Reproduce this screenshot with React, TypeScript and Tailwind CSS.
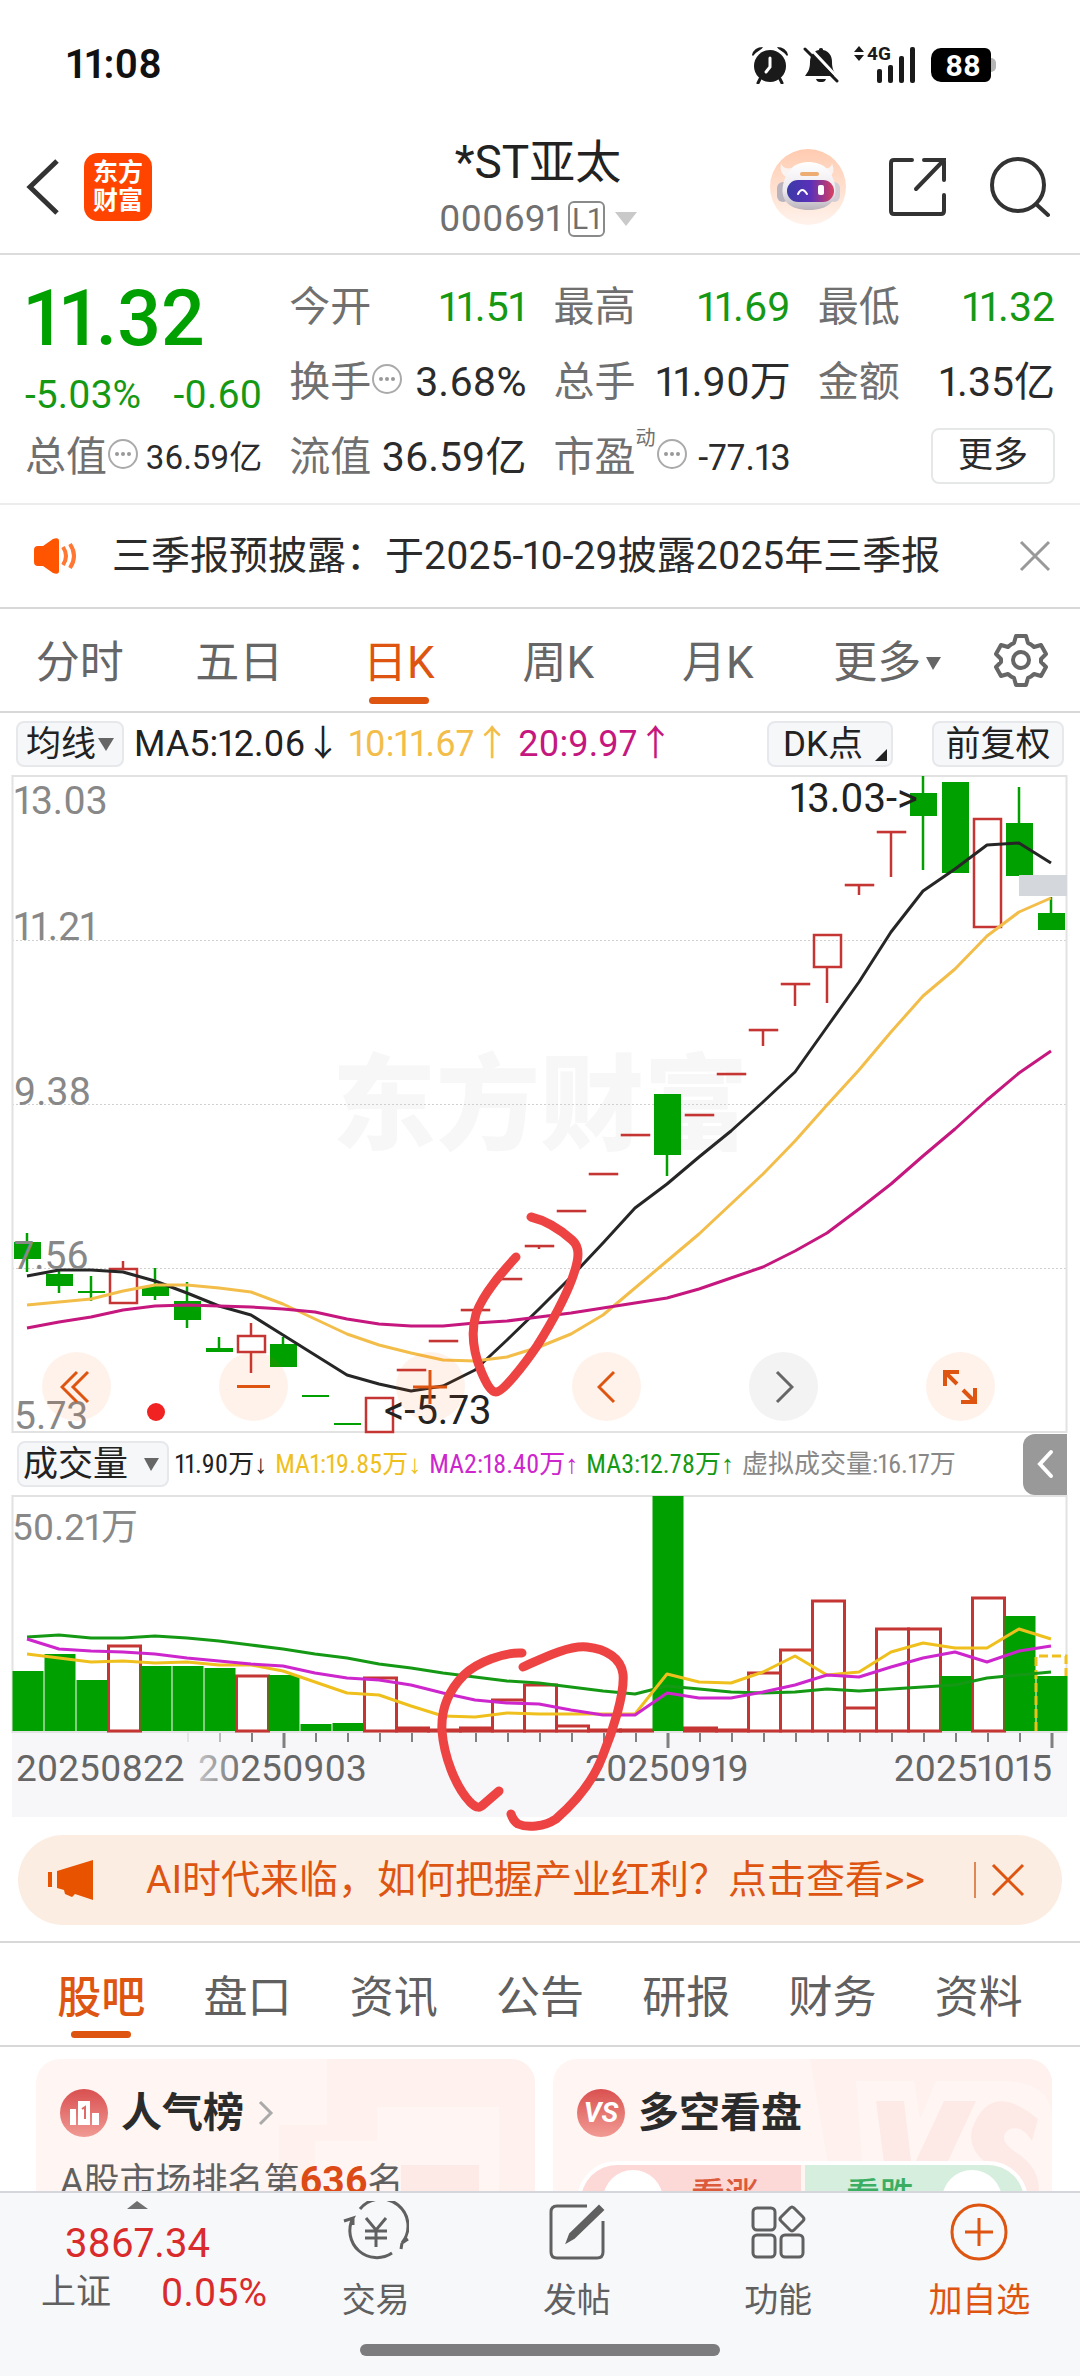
import React from 'react';

const GREEN = '#00a000';
const RED = '#c43533';

type Candle = {
  up: boolean;
  high: number;
  top: number;
  bottom: number;
  low: number;
};

const c = (up: boolean, high: number, top: number, bottom: number, low: number): Candle => ({
  up,
  high,
  top,
  bottom,
  low,
});

const candles: Candle[] = [
  c(false, 1234, 1243, 1260, 1273),
  c(false, 1271, 1275, 1287, 1294),
  c(false, 1277, 1292, 1294, 1302),
  c(true, 1262, 1270, 1304, 1304),
  c(false, 1269, 1287, 1297, 1301),
  c(false, 1283, 1302, 1321, 1329),
  c(false, 1338, 1349, 1353, 1353),
  c(true, 1324, 1337, 1353, 1374),
  c(false, 1338, 1345, 1368, 1368),
  c(false, 1397, 1396, 1398, 1397),
  c(false, 1425, 1424, 1426, 1425),
  c(true, 1399, 1399, 1433, 1433),
  c(true, 1371, 1371, 1371, 1371),
  c(true, 1342, 1342, 1342, 1342),
  c(true, 1311, 1311, 1311, 1311),
  c(true, 1280, 1280, 1280, 1280),
  c(true, 1247, 1247, 1247, 1250),
  c(true, 1212, 1212, 1212, 1212),
  c(true, 1175, 1175, 1175, 1175),
  c(true, 1136, 1136, 1136, 1136),
  c(false, 1095, 1095, 1156, 1177),
  c(true, 1116, 1116, 1116, 1116),
  c(true, 1075, 1075, 1075, 1075),
  c(true, 1031, 1031, 1031, 1047),
  c(true, 985, 985, 985, 1007),
  c(true, 936, 936, 968, 1004),
  c(true, 886, 886, 886, 896),
  c(true, 833, 833, 833, 878),
  c(false, 777, 794, 817, 871),
  c(false, 783, 783, 874, 874),
  c(true, 820, 820, 928, 928),
  c(false, 788, 824, 877, 877),
  c(false, 898, 914, 931, 931),
];

const ma5 = [
  1277, 1271, 1271, 1273, 1282, 1294, 1307, 1316, 1336, 1356, 1376, 1385, 1392, 1387, 1371, 1341, 1310, 1278, 1244,
  1209, 1185, 1158, 1132, 1103, 1073, 1028, 983, 933, 892, 870, 846, 844, 864,
];
const ma10 = [
  1306, 1303, 1300, 1292, 1286, 1286, 1289, 1293, 1305, 1320, 1335, 1346, 1354, 1361, 1362, 1358, 1348, 1335, 1316,
  1289, 1262, 1235, 1205, 1175, 1142, 1106, 1071, 1033, 997, 970, 937, 913, 899,
];
const ma20 = [
  1329, 1323, 1318, 1311, 1307, 1306, 1307, 1308, 1310, 1313, 1320, 1325, 1327, 1327, 1324, 1322, 1318, 1314, 1309,
  1304, 1299, 1290, 1279, 1268, 1252, 1234, 1210, 1185, 1157, 1130, 1101, 1074, 1052,
];

// top of every volume bar, all of them stand on 1732
const volumes = [
  1672, 1655, 1681, 1647, 1667, 1667, 1669, 1677, 1676, 1725, 1724, 1679, 1729, 1731, 1729, 1701, 1686, 1727, 1731,
  1731, 1497, 1729, 1731, 1674, 1651, 1602, 1709, 1630, 1630, 1677, 1599, 1617, 1677,
];
const vma1 = [
  1655, 1659, 1663, 1662, 1664, 1663, 1666, 1666, 1672, 1683, 1694, 1696, 1707, 1717, 1718, 1714, 1715, 1715, 1715,
  1715, 1675, 1683, 1684, 1673, 1657, 1676, 1673, 1653, 1644, 1649, 1649, 1630, 1640,
];
const vma2 = [
  1640, 1650, 1652, 1653, 1655, 1659, 1662, 1665, 1667, 1674, 1679, 1681, 1686, 1694, 1701, 1704, 1705, 1711, 1716,
  1716, 1694, 1699, 1699, 1693, 1686, 1676, 1678, 1668, 1659, 1653, 1663, 1652, 1647,
];
const vma3 = [
  1638, 1636, 1639, 1639, 1637, 1639, 1642, 1646, 1650, 1655, 1659, 1665, 1669, 1674, 1678, 1682, 1684, 1688, 1692,
  1695, 1687, 1690, 1693, 1694, 1693, 1690, 1692, 1690, 1688, 1686, 1679, 1676, 1673,
];

const cx = (i: number) => 27 + i * 32;
const line = (ys: number[]) => ys.map((y, i) => `${cx(i)},${y}`).join(' ');

function StatusBar() {
  return (
    <div className="flex h-[96px] items-center justify-between pt-[34px] pr-[84px] pl-[66px]">
      <span className="text-[40px] leading-none font-semibold text-[#111]">11:08</span>
      <div className="flex items-center">
        <svg width="38" height="38" viewBox="0 0 38 38" fill="#1a1a1a">
          <circle cx="19" cy="20" r="16" />
          <path d="M1 9 Q3 1 12 1 Q11 3 9 4 Q4 7 2 10 Z M37 9 Q35 1 26 1 Q27 3 29 4 Q34 7 36 10 Z" />
          <path d="M9 33 L7 37 M29 33 L31 37" stroke="#1a1a1a" strokeWidth="3" strokeLinecap="round" />
          <path d="M19 12 V21 L15 26" stroke="#fff" strokeWidth="3" fill="none" strokeLinecap="round" />
        </svg>
        <svg className="ml-[14px]" width="36" height="38" viewBox="0 0 36 38" fill="#1a1a1a">
          <path d="M18 2 C20 2 20 3 20 4 C26 5 29 10 29 16 C29 23 31 26 34 30 H2 C5 26 7 23 7 16 C7 10 10 5 16 4 C16 3 16 2 18 2 Z" />
          <path d="M13 33 H23 C22 36 20 36 18 36 C16 36 14 36 13 33 Z" />
          <path d="M5 0 L36 33" stroke="#fff" strokeWidth="3" />
          <path d="M2 3 L34 35" stroke="#1a1a1a" strokeWidth="3" strokeLinecap="round" />
        </svg>
        <div className="relative ml-[14px] h-[38px] w-[64px]">
          <svg width="64" height="38" viewBox="0 0 64 38" fill="#1a1a1a">
            <path d="M6 0 L11 6 H1 Z M6 15 L11 9 H1 Z" />
            <rect x="24" y="23" width="5" height="14" rx="2" />
            <rect x="35" y="19" width="5" height="18" rx="2" />
            <rect x="46" y="10" width="5" height="27" rx="2" />
            <rect x="57" y="1" width="5" height="36" rx="2" />
          </svg>
          <span className="absolute top-0 left-[14px] text-[19px] leading-[16px] font-bold text-[#1a1a1a]">4G</span>
        </div>
        <div className="ml-[14px] flex items-center">
          <span className="flex h-[34px] w-[60px] items-center justify-center rounded-l-[10px] rounded-r-[6px] bg-black pl-[4px] text-[30px] font-bold text-white">
            88
          </span>
          <span className="h-[14px] w-[5px] rounded-r-[5px] bg-[#b5b5b5]" />
        </div>
      </div>
    </div>
  );
}

function Robot() {
  return (
    <svg width="76" height="76" viewBox="0 0 76 76">
      <defs>
        <linearGradient id="halo" x1="0" y1="0" x2="0" y2="1">
          <stop offset="0" stopColor="#ffcbb0" />
          <stop offset="1" stopColor="#fff3ec" />
        </linearGradient>
        <linearGradient id="visor" x1="0" y1="0" x2="1" y2="0">
          <stop offset="0" stopColor="#3a3aa8" />
          <stop offset="0.5" stopColor="#5a30b8" />
          <stop offset="1" stopColor="#d8405f" />
        </linearGradient>
        <linearGradient id="helmet" x1="0" y1="0" x2="0" y2="1">
          <stop offset="0" stopColor="#ffffff" />
          <stop offset="0.6" stopColor="#ece8ee" />
          <stop offset="1" stopColor="#b9b2ba" />
        </linearGradient>
      </defs>
      <circle cx="38" cy="38" r="38" fill="url(#halo)" />
      <path d="M11 14 Q13 21 21 19 L16 28 Q9 24 11 14 Z M62 14 Q61 21 53 19 L59 28 Q66 24 62 14 Z" fill="#fbf3f0" />
      <rect x="7" y="33" width="12" height="20" rx="6" fill="#b9b3bd" />
      <rect x="58" y="33" width="12" height="20" rx="6" fill="#d3cdd6" />
      <path d="M38 13 C54 13 62 22 65 36 C68 52 58 61 39 61 C20 61 10 52 13 36 C16 22 24 13 38 13 Z" fill="url(#helmet)" />
      <rect x="30" y="23" width="19" height="4" rx="2" fill="#ecac72" />
      <rect x="17" y="31" width="47" height="22" rx="11" fill="url(#visor)" />
      <path d="M28 45 Q32 37 37 45" stroke="#fff" strokeWidth="2" fill="none" strokeLinecap="round" />
      <rect x="48" y="36" width="6" height="10" rx="2" fill="#fff" />
    </svg>
  );
}

function Header() {
  return (
    <header className="grid h-[159px] grid-cols-[1fr_auto_1fr] items-center border-b-2 border-[#dcdcdc] px-[26px] pt-[24px]">
      <div className="flex items-center gap-[24px]">
        <button aria-label="返回">
          <svg width="34" height="56" viewBox="0 0 34 56" fill="none" stroke="#333" strokeWidth="5">
            <path d="M31 2 L4 28 L31 54" />
          </svg>
        </button>
        <div className="flex h-[68px] w-[68px] flex-col items-center justify-center rounded-[14px] bg-[#ff4400] text-[25px] leading-[28px] font-bold text-white">
          <span>东方</span>
          <span>财富</span>
        </div>
      </div>
      <div className="flex flex-col items-center pt-[4px] pr-[4px]">
        <h1 className="text-[46px] leading-[60px] text-[#222]">*ST亚太</h1>
        <div className="flex h-[54px] items-center text-[37px] text-[#707070]">
          000691
          <span className="ml-[6px] flex h-[36px] items-center rounded-[6px] border-2 border-[#8a8a8a] px-[2px] text-[30px]">L1</span>
          <svg className="ml-[10px]" width="22" height="14" viewBox="0 0 22 14">
            <path d="M0 0 H22 L11 14 Z" fill="#c9c9c9" />
          </svg>
        </div>
      </div>
      <div className="flex items-center justify-end gap-[42px] pr-[4px]">
        <button aria-label="智能助手">
          <Robot />
        </button>
        <button aria-label="分享">
          <svg width="60" height="60" viewBox="0 0 60 60" fill="none" stroke="#333" strokeWidth="4" strokeLinecap="round">
            <path d="M24 3 H6 Q3 3 3 6 V54 Q3 57 6 57 H53 Q56 57 56 54 V38" />
            <path d="M36 3 H56 V23 M56 3 L28 32" />
          </svg>
        </button>
        <button aria-label="搜索">
          <svg width="60" height="62" viewBox="0 0 60 62" fill="none" stroke="#333" strokeWidth="4" strokeLinecap="round">
            <circle cx="28" cy="29" r="26" />
            <path d="M46 48 L58 59" />
          </svg>
        </button>
      </div>
    </header>
  );
}

function Dots() {
  return (
    <svg className="mb-[8px] shrink-0" width="32" height="32" viewBox="0 0 32 32">
      <circle cx="16" cy="16" r="14" fill="none" stroke="#aaa" strokeWidth="2" />
      <circle cx="10" cy="16" r="2" fill="#999" />
      <circle cx="16" cy="16" r="2" fill="#999" />
      <circle cx="22" cy="16" r="2" fill="#999" />
    </svg>
  );
}

function Stat({ label, value, green, dots, small }: { label: string; value: string; green?: boolean; dots?: boolean; small?: boolean }) {
  return (
    <div className="flex h-[75px] items-center justify-between whitespace-nowrap">
      <span className="flex items-center text-[41px] text-[#707070]">
        {label}
        {dots && <Dots />}
      </span>
      <span className={`${small ? 'text-[33px]' : 'text-[41px]'} ${green ? 'text-[#159915]' : 'text-[#2b2b2b]'}`}>{value}</span>
    </div>
  );
}

function Quote() {
  return (
    <section className="grid grid-cols-4 gap-x-[27px] border-b-2 border-[#ececec] px-[25px] pt-[15px] pb-[8px]">
      <div>
        <div className="flex h-[100px] items-center text-[77px] font-medium text-[#00a000]">11.32</div>
        <div className="flex h-[50px] items-center justify-between text-[39px] text-[#159915]">
          <span>-5.03%</span>
          <span>-0.60</span>
        </div>
        <Stat label="总值" value="36.59亿" dots small />
      </div>
      <div>
        <Stat label="今开" value="11.51" green />
        <Stat label="换手" value="3.68%" dots />
        <Stat label="流值" value="36.59亿" />
      </div>
      <div>
        <Stat label="最高" value="11.69" green />
        <Stat label="总手" value="11.90万" />
        <div className="flex h-[75px] items-center justify-between whitespace-nowrap">
          <span className="flex items-center text-[41px] text-[#707070]">
            市盈
            <span className="mb-[40px] text-[20px] leading-[20px]">动</span>
            <Dots />
          </span>
          <span className="text-[36px] text-[#2b2b2b]">-77.13</span>
        </div>
      </div>
      <div>
        <Stat label="最低" value="11.32" green />
        <Stat label="金额" value="1.35亿" />
        <div className="flex h-[75px] items-center justify-end">
          <button className="mb-[4px] h-[56px] w-[124px] rounded-[8px] border-2 border-[#e6e8e8] text-[35px] leading-none text-[#2b2b2b]">
            更多
          </button>
        </div>
      </div>
    </section>
  );
}

function Notice() {
  return (
    <section className="flex h-[104px] items-center border-b-2 border-[#d8d8d8] pr-[28px] pl-[33px]">
      <svg width="46" height="38" viewBox="0 0 46 38">
        <path d="M5 9 H10 L20 2 Q26 0 26 4 V34 Q26 38 20 36 L10 29 H5 Q1 29 1 25 V13 Q1 9 5 9 Z" fill="#ff5500" />
        <path d="M30 10 Q36 19 30 28 M37 7 Q45 19 37 31" fill="none" stroke="#ff7733" strokeWidth="4" />
      </svg>
      <p className="ml-[33px] flex-1 text-[39px] leading-none whitespace-nowrap text-[#2b2b2b]">三季报预披露：于2025-10-29披露2025年三季报</p>
      <button aria-label="关闭">
        <svg width="34" height="34" viewBox="0 0 34 34" stroke="#999" strokeWidth="3">
          <path d="M3 3 L31 31 M31 3 L3 31" />
        </svg>
      </button>
    </section>
  );
}

const periods = ['分时', '五日', '日K', '周K', '月K', '更多'];

function PeriodTabs() {
  return (
    <nav className="flex h-[104px] items-center border-b-2 border-[#d8d8d8] pr-[31px]">
      {periods.map((p) => (
        <button
          key={p}
          className={`relative flex h-full flex-1 items-center justify-center pt-[6px] text-[44px] whitespace-nowrap ${p === '日K' ? 'text-[#dd5511]' : 'text-[#666]'}`}
        >
          {p}
          {p === '更多' && (
            <svg className="absolute right-[16px]" width="15" height="13" viewBox="0 0 15 13">
              <path d="M0 0 H15 L7 13 Z" fill="#666" />
            </svg>
          )}
          {p === '日K' && <span className="absolute bottom-[7px] h-[7px] w-[60px] rounded-full bg-[#dd5511]" />}
        </button>
      ))}
      <button className="ml-[36px]" aria-label="设置">
        <svg width="56" height="56" viewBox="0 0 56 56" fill="none" stroke="#666" strokeWidth="4" strokeLinejoin="round">
          <path d="M23 4 H33 L35 11 Q38 12 41 15 L48 13 L53 22 L48 27 V30 L53 35 L48 44 L41 42 Q38 45 35 46 L33 53 H23 L21 46 Q18 45 15 42 L8 44 L3 35 L8 30 V27 L3 22 L8 13 L15 15 Q18 12 21 11 Z" />
          <circle cx="28" cy="28" r="8" />
        </svg>
      </button>
    </nav>
  );
}

function IndicatorBar() {
  return (
    <div className="flex h-[62px] items-center pr-[16px] pl-[16px] text-[36px] leading-none whitespace-nowrap">
      <button className="flex h-[46px] items-center rounded-[8px] border-2 border-[#e6e8ec] bg-[#f6f7f9] px-[8px] text-[35px] text-[#222]">
        均线
        <svg className="ml-[2px]" width="16" height="13" viewBox="0 0 16 13">
          <path d="M0 0 H16 L8 13 Z" fill="#666" />
        </svg>
      </button>
      <div className="flex flex-1 gap-[8px] pl-[10px]">
        <span className="text-[#222]">MA5:12.06↓</span>
        <span className="text-[#f3bd4a]">10:11.67↑</span>
        <span className="text-[#c5177e]">20:9.97↑</span>
      </div>
      <button className="relative h-[46px] w-[126px] rounded-[8px] border-2 border-[#e6e8ec] bg-[#f6f7f9] pr-[14px] text-[35px] text-[#222]">
        DK点
        <svg className="absolute right-[4px] bottom-[4px]" width="12" height="12" viewBox="0 0 12 12">
          <path d="M12 0 V12 H0 Z" fill="#222" />
        </svg>
      </button>
      <button className="ml-[39px] h-[46px] w-[132px] rounded-[8px] border-2 border-[#e6e8ec] bg-[#f6f7f9] text-[35px] text-[#222]">前复权</button>
    </div>
  );
}

function PriceChart() {
  return (
    <div className="relative">
      <svg className="block w-full overflow-visible" viewBox="0 776 1080 658">
        <text x="540" y="1143" textAnchor="middle" fontSize="104" fontWeight="900" fill="#f7f7f7">
          东方财富
        </text>
        {[941, 1105, 1269].map((y) => (
          <line key={y} x1="12" x2="1067" y1={y + 0.5} y2={y + 0.5} stroke="#d0d0d0" strokeDasharray="2 2" />
        ))}
        <rect x="12.5" y="777" width="1054" height="656" fill="none" stroke="#e2e2e2" strokeWidth="2" />
        {candles.map((k, i) => {
          const x = cx(i);
          return (
            <g key={i} stroke={k.up ? RED : GREEN} strokeWidth="2.5">
              {k.high < k.top && <line x1={x} x2={x} y1={k.high} y2={k.top} />}
              {k.low > k.bottom && <line x1={x} x2={x} y1={k.bottom} y2={k.low} />}
              <rect
                x={x - 13}
                y={k.top}
                width="27"
                height={Math.max(k.bottom - k.top, 0.1)}
                fill={k.up ? 'none' : GREEN}
                strokeWidth={k.up ? 2.5 : 0}
              />
            </g>
          );
        })}
        <rect x="1019" y="876" width="48" height="21" fill="#d4d7dc" />
        <g fill="none" strokeWidth="3" strokeLinejoin="round">
          <polyline points={line(ma5)} stroke="#262626" />
          <polyline points={line(ma10)} stroke="#f3bd4a" />
          <polyline points={line(ma20)} stroke="#c5177e" />
        </g>
        <g fontSize="39" fill="#888">
          <text x="14" y="815">13.03</text>
          <text x="14" y="941">11.21</text>
          <text x="14" y="1106">9.38</text>
          <text x="14" y="1270">7.56</text>
          <text x="14" y="1430">5.73</text>
        </g>
        <g fontSize="40" fill="#222">
          <text x="918" y="813" textAnchor="end">{'13.03->'}</text>
          <text x="384" y="1425">{'<-5.73'}</text>
        </g>
        <circle cx="156" cy="1413" r="9" fill="#f02222" />
      </svg>
      <div className="absolute right-[85px] bottom-[12px] left-[42px] flex justify-between">
        <button aria-label="最早" className="flex h-[69px] w-[69px] items-center justify-center rounded-full bg-[#ff5a00]/8">
          <svg className="mr-[4px]" width="30" height="34" viewBox="0 0 30 34" fill="none" stroke="#dd5511" strokeWidth="3">
            <path d="M17 2 L2 17 L17 32 M28 2 L13 17 L28 32" />
          </svg>
        </button>
        <button aria-label="缩小" className="flex h-[69px] w-[69px] items-center justify-center rounded-full bg-[#ff5a00]/8">
          <span className="h-[3px] w-[33px] bg-[#dd5511]" />
        </button>
        <button aria-label="放大" className="flex h-[69px] w-[69px] items-center justify-center rounded-full bg-[#ff5a00]/8">
          <svg width="34" height="34" viewBox="0 0 34 34" stroke="#dd5511" strokeWidth="3">
            <path d="M17 0 V34 M0 17 H34" />
          </svg>
        </button>
        <button aria-label="左移" className="flex h-[69px] w-[69px] items-center justify-center rounded-full bg-[#ff5a00]/8">
          <svg width="20" height="34" viewBox="0 0 20 34" fill="none" stroke="#dd5511" strokeWidth="3">
            <path d="M17 2 L2 17 L17 32" />
          </svg>
        </button>
        <button aria-label="右移" className="flex h-[69px] w-[69px] items-center justify-center rounded-full bg-[#f3f3f3]">
          <svg width="20" height="34" viewBox="0 0 20 34" fill="none" stroke="#666" strokeWidth="3">
            <path d="M3 2 L18 17 L3 32" />
          </svg>
        </button>
        <button aria-label="全屏" className="flex h-[69px] w-[69px] items-center justify-center rounded-full bg-[#ff5a00]/8">
          <svg width="34" height="34" viewBox="0 0 34 34" fill="none" stroke="#dd5511" strokeWidth="4">
            <path d="M16 2 H2 V16 M2 2 L14 14 M18 32 H32 V18 M32 32 L20 20" />
          </svg>
        </button>
      </div>
    </div>
  );
}

function VolumeBar() {
  return (
    <div className="flex h-[62px] items-center pr-[13px] pl-[17px] leading-none whitespace-nowrap">
      <button className="flex h-[46px] items-center rounded-[8px] border-2 border-[#e6e8ec] bg-[#f6f7f9] pr-[8px] pl-[4px] text-[35px] text-[#222]">
        成交量
        <svg className="ml-[16px]" width="15" height="13" viewBox="0 0 15 13">
          <path d="M0 0 H15 L7 13 Z" fill="#666" />
        </svg>
      </button>
      <div className="flex flex-1 gap-[8px] pl-[6px] font-['Roboto_Condensed','Liberation_Sans_Narrow','Liberation_Sans','Noto_Sans_CJK_SC',sans-serif] text-[26px]">
        <span className="text-[#222]">11.90万↓</span>
        <span className="text-[#efc01d]">MA1:19.85万↓</span>
        <span className="text-[#cc26cc]">MA2:18.40万↑</span>
        <span className="text-[#159915]">MA3:12.78万↑</span>
        <span className="text-[#888]">虚拟成交量:16.17万</span>
      </div>
      <button aria-label="展开" className="flex h-[61px] w-[44px] items-center justify-center rounded-l-[12px] bg-[#999]">
        <svg width="18" height="30" viewBox="0 0 18 30" fill="none" stroke="#fff" strokeWidth="4" strokeLinecap="round">
          <path d="M15 3 L4 15 L15 27" />
        </svg>
      </button>
    </div>
  );
}

function VolumeChart() {
  return (
    <svg className="block w-full" viewBox="0 1496 1080 322">
      <defs>
        <linearGradient id="fade" gradientUnits="userSpaceOnUse" x1="198" x2="246" y1="0" y2="0">
          <stop offset="0" stopColor="#c4c4c6" />
          <stop offset="1" stopColor="#666" />
        </linearGradient>
      </defs>
      <rect x="12.5" y="1497" width="1054" height="236" fill="none" stroke="#e2e2e2" strokeWidth="2" />
      <rect x="12" y="1734" width="1055" height="84" fill="#f7f7fa" />
      {volumes.map((y, i) => {
        // a long lower shadow on the 29th day still closed above the day before
        const up = candles[i].up || i === 28;
        const x = 12.5 + i * 32;
        return up ? (
          <rect key={i} x={x} y={y} width="32" height={Math.max(1732 - y, 1)} fill="#fff" stroke={RED} strokeWidth="3" />
        ) : (
          <rect key={i} x={x} y={y} width="31" height={1732 - y} fill={GREEN} />
        );
      })}
      <path d="M1036 1732 V1657 H1066 V1677" fill="none" stroke="#efc01d" strokeWidth="3" strokeDasharray="9 4" />
      <g fill="none" strokeWidth="3" strokeLinejoin="round">
        <polyline points={line(vma3)} stroke="#159915" />
        <polyline points={line(vma1)} stroke="#efc01d" />
        <polyline points={line(vma2)} stroke="#cc26cc" />
      </g>
      {volumes.map((_, i) =>
        i < 5 ? null : (
          <line
            key={i}
            x1={28 + i * 32}
            x2={28 + i * 32}
            y1="1734"
            y2={i % 12 === 8 ? 1749 : 1743}
            stroke={i === 5 ? '#e4e4e6' : i === 6 ? '#bbb' : '#808080'}
            strokeWidth={i % 12 === 8 ? 3 : 2}
          />
        ),
      )}
      <g fontSize="37" fill="#666">
        <text x="12" y="1541" fill="#888">
          50.21万
        </text>
        <text x="16" y="1782">20250822</text>
        <text x="198" y="1782" fill="url(#fade)">
          20250903
        </text>
        <text x="667" y="1782" textAnchor="middle">
          20250919
        </text>
        <text x="1052" y="1782" textAnchor="end">
          20251015
        </text>
      </g>
    </svg>
  );
}

// hand drawn marks over both charts
function Marks() {
  return (
    <svg
      className="pointer-events-none absolute inset-0 w-full overflow-visible"
      viewBox="0 714 1080 1104"
      fill="none"
      stroke="#ee4343"
      strokeWidth="9"
      strokeLinecap="round"
      strokeLinejoin="round"
    >
      <path d="M516 1258 C505 1270 483 1294 476 1315 C471 1332 473 1352 481 1372 C486 1384 491 1393 496 1393 C503 1393 524 1366 537 1347 C554 1320 566 1296 572 1280 C580 1258 580 1248 572 1241 C563 1233 548 1222 531 1218" />
      <path d="M522 1654 C505 1653 477 1663 464 1676 C446 1694 441 1714 442 1732 C444 1757 455 1787 470 1803 C477 1810 480 1809 484 1805 L499 1792" />
      <path d="M523 1668 C543 1659 569 1646 587 1648 C606 1650 621 1659 623 1675 C625 1695 612 1734 603 1756 C593 1784 572 1806 556 1820 C544 1828 527 1829 518 1825 C515 1823 512 1818 511 1815" />
    </svg>
  );
}

function Banner() {
  return (
    <section className="mx-[18px] mt-[18px] flex h-[90px] items-center rounded-full bg-[#fcede3] pr-[36px] pl-[29px] text-[#dd5511]">
      <svg width="46" height="40" viewBox="0 0 46 40" fill="#e85300">
        <rect x="1" y="12" width="4" height="15" />
        <path d="M10 11 L46 0 V40 L28 34 L25 37 L18 34 L17 30 L10 28 Z" />
      </svg>
      <a href="#ai" className="ml-[53px] flex-1 text-[39px] leading-none whitespace-nowrap">
        AI时代来临，如何把握产业红利？点击查看&gt;&gt;
      </a>
      <span className="mr-[14px] h-[36px] w-[2px] bg-[#dd8855]" />
      <button aria-label="关闭广告">
        <svg width="36" height="36" viewBox="0 0 36 36" stroke="#dd5511" strokeWidth="3">
          <path d="M3 3 L33 33 M33 3 L3 33" />
        </svg>
      </button>
    </section>
  );
}

const sections = ['股吧', '盘口', '资讯', '公告', '研报', '财务', '资料'];

function SectionTabs() {
  return (
    <nav className="mt-[16px] flex h-[106px] border-y-2 border-[#d8d8d8] px-[28px]">
      {sections.map((s, i) => (
        <button
          key={s}
          className={`relative flex flex-1 items-center justify-center pt-[8px] text-[44px] ${i === 0 ? 'font-medium text-[#dd5511]' : 'text-[#606060]'}`}
        >
          {s}
          {i === 0 && <span className="absolute bottom-[7px] h-[7px] w-[60px] rounded-full bg-[#dd5511]" />}
        </button>
      ))}
    </nav>
  );
}

function Cards() {
  return (
    <section className="grid grid-cols-2 gap-[18px] pt-[12px] pr-[28px] pl-[36px]">
      <div className="relative h-[200px] overflow-hidden rounded-[24px] bg-[#fff6f4] px-[24px] pt-[24px]">
        <svg className="absolute top-0 right-0" width="256" height="200" viewBox="0 0 256 200">
          <path d="M48 0 H256 V200 H0 V66 H48 Z" fill="#fef1ee" />
          <path d="M98 48 H220 V200 H36 V82 H98 Z" fill="#fff6f4" />
          <path d="M122 106 H200 V200 H72 V154 H122 Z" fill="#fdeae7" />
          <path d="M146 172 L166 152 H176 V200 H160 V172 Z" fill="#fff6f4" />
        </svg>
        <div className="relative flex items-center text-[41px] leading-[60px] font-bold text-[#2b2b2b]">
          <svg className="mr-[13px]" width="48" height="48" viewBox="0 0 48 48">
            <defs>
              <linearGradient id="badge" x1="0" y1="0" x2="0" y2="1">
                <stop offset="0" stopColor="#d95050" />
                <stop offset="1" stopColor="#f19a94" />
              </linearGradient>
            </defs>
            <circle cx="24" cy="24" r="24" fill="url(#badge)" />
            <path d="M10 20 H16 V36 H10 Z M18 12 H30 V36 H18 Z M32 24 H39 V36 H32 Z" fill="#fff" />
            <path d="M22 20 L25 18 V30" fill="none" stroke="#df6a66" strokeWidth="2" />
          </svg>
          人气榜
          <svg className="ml-[14px]" width="16" height="26" viewBox="0 0 16 26" fill="none" stroke="#aaa" strokeWidth="3">
            <path d="M2 2 L13 13 L2 24" />
          </svg>
        </div>
        <p className="relative mt-[12px] text-[36px] leading-[52px] whitespace-nowrap text-[#606060]">
          A股市场排名第<b className="text-[39px] text-[#dc4a16]">636</b>名
        </p>
      </div>
      <div className="relative h-[200px] overflow-hidden rounded-[24px] bg-[#fff6f4] px-[24px] pt-[24px]">
        <svg className="absolute top-0 right-0" width="242" height="200" viewBox="0 0 242 200">
          <path d="M0 0 H242 V200 H34 Z" fill="#fef1ee" />
          <path d="M46 22 H104 L110 60 L126 22 H190 Q242 22 242 60 V200 H60 Z" fill="#fff6f4" />
          <path d="M66 42 H94 L102 110 L134 42 H166 L116 150 H80 Z M228 60 Q180 20 162 70 Q156 96 190 112 Q206 124 186 134 L160 126 V160 H220 Q242 120 210 96 Q184 80 200 70 Q212 66 222 82 Z" fill="#fdeae7" />
        </svg>
        <div className="relative flex items-center text-[41px] leading-[60px] font-bold text-[#2b2b2b]">
          <span className="mr-[13px] flex h-[48px] w-[48px] items-center justify-center rounded-full bg-linear-to-b from-[#d95050] to-[#f19a94] text-[28px] text-white italic">
            VS
          </span>
          多空看盘
        </div>
        <div className="relative mt-[18px] flex h-[80px] gap-[4px] rounded-full border-4 border-white text-[34px] leading-[50px] font-medium">
          <button className="flex flex-1 rounded-l-full bg-[#fcd9d7] pt-[5px] text-[#dc5a3c]">
            <span className="mr-[28px] ml-[22px] h-[60px] w-[60px] rounded-full bg-white" />
            看涨
          </button>
          <button className="flex flex-1 justify-end rounded-r-full bg-[#d5eedd] pt-[5px] text-[#3cae64]">
            看跌
            <span className="mr-[22px] ml-[28px] h-[60px] w-[60px] rounded-full bg-white" />
          </button>
        </div>
      </div>
    </section>
  );
}

function BottomBar() {
  return (
    <footer className="relative border-t-2 border-[#d4d6dc] bg-[#f7f8fa]">
      <div className="flex h-[151px]">
        <button className="flex w-[275px] flex-col items-center pt-[8px] whitespace-nowrap">
          <svg width="21" height="8" viewBox="0 0 21 8">
            <path d="M10 0 L21 8 H0 Z" fill="#707070" />
          </svg>
          <span className="mt-[10px] text-[40px] leading-[50px] text-[#d92b2b]">3867.34</span>
          <span className="flex w-full items-center justify-between pr-[8px] pl-[41px] text-[35px] leading-[48px] text-[#606060]">
            上证
            <span className="text-[39px] text-[#d92b2b]">0.05%</span>
          </span>
        </button>
        <button className="flex flex-1 flex-col items-center pt-[8px] text-[34px] text-[#606060]">
          <svg width="66" height="60" viewBox="0 0 66 60" fill="none" stroke="#606060" strokeWidth="3">
            <path d="M17 8 A27 27 0 0 1 59 42 L65 38 M59 42 L58 48" />
            <path d="M49 52 A27 27 0 0 1 10 17 L1 20 M10 17 V24" />
            <path d="M23 17 L33 29 L43 17 M22 30 H44 M22 37 H44 M33 29 V46" />
          </svg>
          <span className="mt-[14px] leading-[50px]">交易</span>
        </button>
        <button className="flex flex-1 flex-col items-center pt-[8px] text-[34px] text-[#606060]">
          <svg width="60" height="60" viewBox="0 0 60 60" fill="none" stroke="#606060" strokeWidth="3">
            <path d="M40 5 H10 Q4 5 4 11 V51 Q4 57 10 57 H50 Q56 57 56 51 V20" />
            <path d="M20 41 L23 33 L52 5 L56 9 L27 37 Z" fill="#606060" strokeWidth="2" />
          </svg>
          <span className="mt-[14px] leading-[50px]">发帖</span>
        </button>
        <button className="flex flex-1 flex-col items-center pt-[8px] text-[34px] text-[#606060]">
          <svg width="60" height="60" viewBox="0 0 60 60" fill="none" stroke="#606060" strokeWidth="3" strokeLinejoin="round">
            <rect x="5" y="7" width="22" height="22" rx="4" />
            <rect x="5" y="34" width="22" height="22" rx="4" />
            <rect x="33" y="34" width="22" height="22" rx="4" />
            <path d="M42 7 Q44 5 46 7 L55 16 Q57 18 55 20 L46 29 Q44 31 42 29 L33 20 Q31 18 33 16 Z" />
          </svg>
          <span className="mt-[14px] leading-[50px]">功能</span>
        </button>
        <button className="flex flex-1 flex-col items-center pt-[8px] text-[34px] text-[#dd5511]">
          <svg width="60" height="60" viewBox="0 0 60 60" fill="none" stroke="#dd5511" strokeWidth="3">
            <circle cx="30" cy="31" r="27" />
            <path d="M30 17 V45 M16 31 H44" />
          </svg>
          <span className="mt-[14px] leading-[50px]">加自选</span>
        </button>
      </div>
      <div className="mx-auto mb-[20px] h-[12px] w-1/3 rounded-full bg-[#7c7c7e]" />
    </footer>
  );
}

function App() {
  return (
    <div className="flex h-screen w-full flex-col overflow-hidden bg-white font-[Roboto,'Noto_Sans_CJK_SC',sans-serif] proportional-nums">
      <StatusBar />
      <Header />
      <main className="min-h-0 flex-1 overflow-hidden">
        <Quote />
        <Notice />
        <PeriodTabs />
        <section className="relative">
          <IndicatorBar />
          <PriceChart />
          <VolumeBar />
          <VolumeChart />
          <Marks />
        </section>
        <Banner />
        <SectionTabs />
        <Cards />
      </main>
      <BottomBar />
    </div>
  );
}

export default App;
